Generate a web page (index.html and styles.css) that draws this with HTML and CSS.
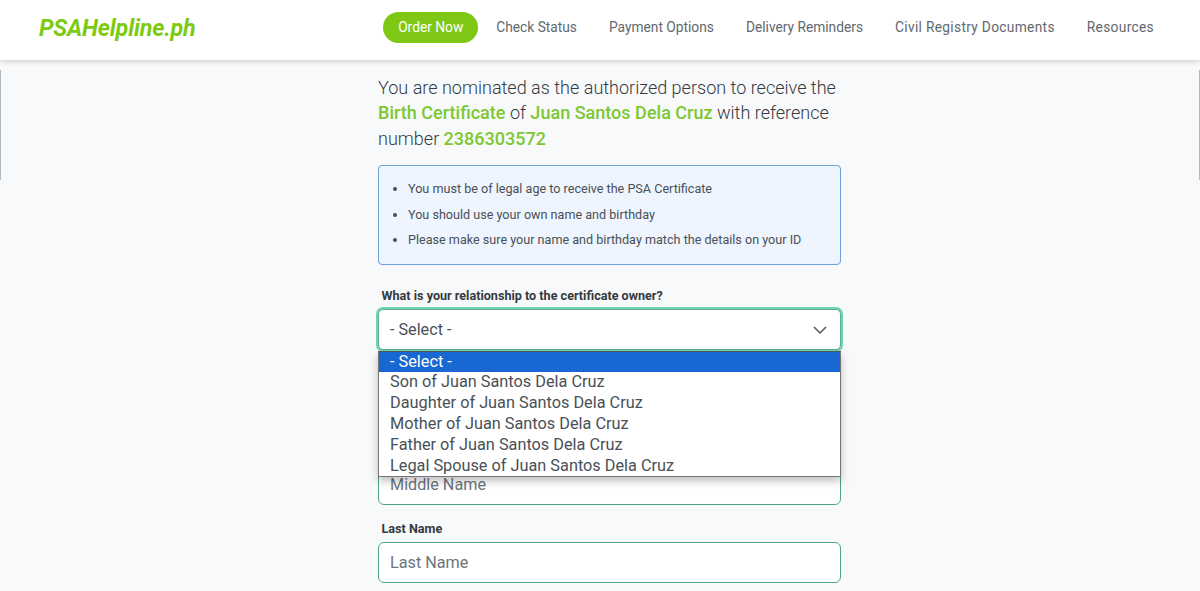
FILE: index.html
```html
<!DOCTYPE html>
<html lang="en">
<head>
<meta charset="utf-8">
<title>PSAHelpline.ph</title>
<link rel="stylesheet" href="styles.css">
</head>
<body>
<header class="topbar">
  <a class="logo" href="#">PSAHelpline.ph</a>
  <nav class="nav">
    <a class="nav-link nav-active" href="#">Order Now</a>
    <a class="nav-link" href="#">Check Status</a>
    <a class="nav-link" href="#">Payment Options</a>
    <a class="nav-link" href="#">Delivery Reminders</a>
    <a class="nav-link nav-wide" href="#">Civil Registry Documents</a>
    <a class="nav-link nav-wide" href="#">Resources</a>
  </nav>
</header>
<div class="edge edge-left"></div>
<div class="edge edge-right"></div>
<main class="content">
  <p class="intro">You are nominated as the authorized person to receive the <strong>Birth Certificate</strong> of <strong>Juan Santos Dela Cruz</strong> with reference number <strong>2386303572</strong></p>
  <div class="notice">
    <ul>
      <li>You must be of legal age to receive the PSA Certificate</li>
      <li>You should use your own name and birthday</li>
      <li>Please make sure your name and birthday match the details on your ID</li>
    </ul>
  </div>
  <form class="form">
    <div class="field field-select">
      <label class="label">What is your relationship to the certificate owner?</label>
      <div class="select">
        <span>- Select -</span>
        <svg class="chevron" width="16" height="16" viewBox="0 0 16 16" aria-hidden="true"><path d="M2.5 5.5 8 11l5.5-5.5" fill="none" stroke="#5a6268" stroke-width="1.7" stroke-linecap="round" stroke-linejoin="round"/></svg>
      </div>
      <ul class="dropdown">
        <li class="option option-active">- Select -</li>
        <li class="option">Son of Juan Santos Dela Cruz</li>
        <li class="option">Daughter of Juan Santos Dela Cruz</li>
        <li class="option">Mother of Juan Santos Dela Cruz</li>
        <li class="option">Father of Juan Santos Dela Cruz</li>
        <li class="option">Legal Spouse of Juan Santos Dela Cruz</li>
      </ul>
    </div>
    <div class="field">
      <label class="label">First Name</label>
      <input class="input" placeholder="First Name">
    </div>
    <div class="field">
      <label class="label">Middle Name</label>
      <input class="input" placeholder="Middle Name">
    </div>
    <div class="field">
      <label class="label">Last Name</label>
      <input class="input" placeholder="Last Name">
    </div>
  </form>
</main>
</body>
</html>
```
FILE: styles.css
```css
* { box-sizing: border-box; }
html, body { height: 100%; }
body {
  margin: 0;
  height: 591px;
  overflow: hidden;
  background: #f8f9fb;
  font-family: Roboto, "Liberation Sans", sans-serif;
  color: #343a40;
  position: relative;
}
.topbar {
  height: 60px;
  background: #fff;
  box-shadow: 0 1px 6px rgba(0, 0, 0, .2);
  display: flex;
  align-items: center;
  justify-content: space-between;
  padding: 0 30px 5px 39px;
  position: relative;
  z-index: 2;
}
.logo {
  font-size: 23.3px;
  font-weight: 700;
  font-style: italic;
  color: #7ccb12;
  text-decoration: none;
  letter-spacing: -.2px;
}
.nav { display: flex; align-items: center; }
.nav-link {
  font-size: 13.75px;
  color: #62686e;
  text-decoration: none;
  padding: 0 16px;
  line-height: 31px;
}
.nav-wide { letter-spacing: .31px; }
.nav-active {
  background: #7ec815;
  color: #fff;
  border-radius: 16px;
  padding: 0 14.5px 0 15px;
  margin-right: 2.5px;
}
.edge {
  position: absolute;
  top: 70px;
  height: 110px;
  width: 1px;
  background: #b5b8bb;
}
.edge-left { left: 0; }
.edge-right { right: 0; }
.content {
  width: 463px;
  margin: 0 auto;
  padding: 15px 0 0;
  position: relative;
  left: 9.5px;
}
.intro {
  margin: 0 0 14px;
  font-size: 18.04px;
  line-height: 25.4px;
  font-weight: 300;
  color: #343a40;
}
.intro strong { font-weight: 500; color: #7dc832; }
.notice {
  height: 100px;
  background: #eef5fe;
  border: 1px solid #6d9fdc;
  border-radius: 4px;
  padding: 10px 16px 0 0;
}
.notice ul { margin: 0; padding: 0 0 0 29px; }
.notice li {
  font-size: 12.6px;
  line-height: 25.4px;
  color: #495057;
}
.form { margin-top: 23px; }
.field { margin-bottom: 16px; position: relative; }
.field-select { margin-bottom: 15px; }
.label {
  display: block;
  font-size: 12.6px;
  font-weight: 700;
  line-height: 16px;
  padding-left: 3.5px;
  margin-bottom: 5px;
  color: #343a40;
}
.select {
  height: 41px;
  background: #fff;
  border: 1px solid #5fae8f;
  border-radius: 5px;
  box-shadow: 0 0 0 2px #6fd4b3;
  display: flex;
  align-items: center;
  justify-content: space-between;
  padding: 0 12px 0 11px;
  font-size: 16.2px;
  color: #495057;
}
.chevron { display: block; }
.dropdown {
  position: absolute;
  left: 0;
  right: 0;
  top: 62.4px;
  margin: 0;
  padding: 0;
  list-style: none;
  background: #fff;
  border: 1px solid #767676;
  border-top-color: #555;
  box-shadow: 0 4px 8px rgba(0, 0, 0, .25);
  z-index: 3;
}
.option {
  height: 20.8px;
  line-height: 20.8px;
  padding-left: 11px;
  font-size: 16.3px;
  color: #495057;
}
.option-active { background: #1967d2; color: #fff; }
.input {
  display: block;
  width: 100%;
  height: 41px;
  background: #fff;
  border: 1px solid #4fa487;
  border-radius: 6px;
  padding: 0 11px;
  font: 16.2px Roboto, "Liberation Sans", sans-serif;
  color: #495057;
  outline: none;
}
.input::placeholder { color: #6c757d; opacity: 1; }
```
